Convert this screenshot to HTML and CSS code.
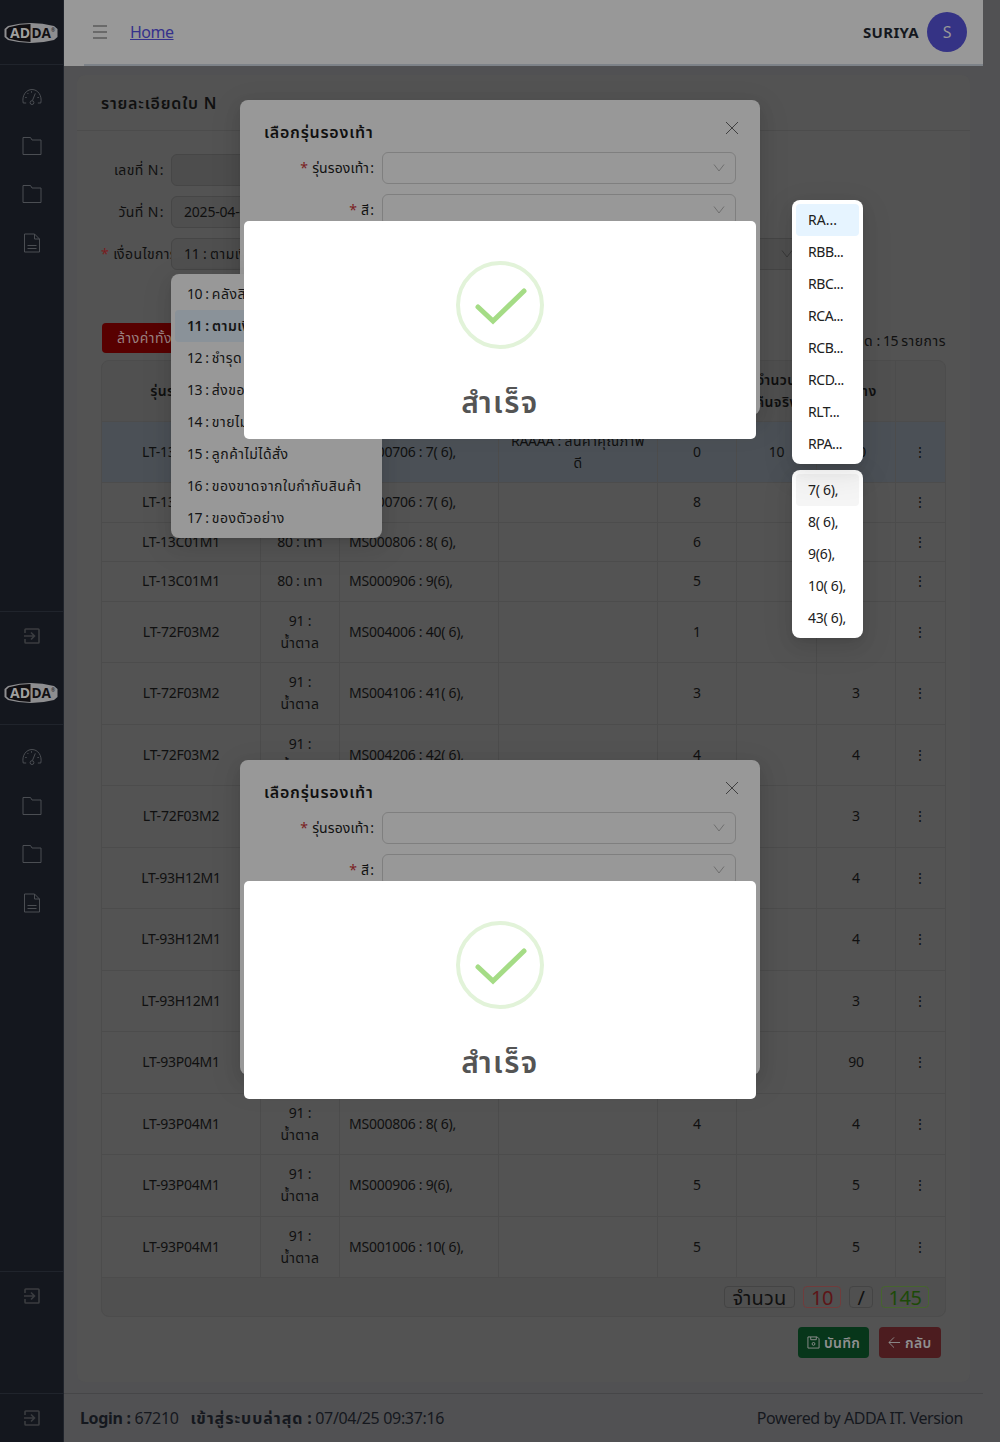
FILE: index.html
```html
<!DOCTYPE html>
<html lang="th">
<head>
<meta charset="utf-8">
<title>รายละเอียดใบ N</title>
<link rel="stylesheet" href="styles.css">
</head>
<body>
<svg width="0" height="0" class="defs">
  <symbol id="i-dash" viewBox="0 0 20 20"><path d="M4.200 16H1.200C-.4 8.500 4.200 2.500 10 2.500S20.400 8.500 18.800 16h-3"/><path d="M10.500 13.400l2.800-7"/><circle cx="10" cy="15.600" r="1.900"/><path d="M3.200 10.500h1.500M15.400 10.500h1.500M5.400 6l1 1M9.500 4.200v1.500"/></symbol>
  <symbol id="i-folder" viewBox="0 0 20 20"><path d="M1 1.500h7.500l1.500 2.500h9v14.500H1z"/></symbol>
  <symbol id="i-doc" viewBox="0 0 20 20"><path d="M2.500 1h10l5 5v13h-15zM12.500 1v5h5M5.500 12.500h9M5.500 15.500h9"/></symbol>
  <symbol id="i-exit" viewBox="0 0 16 16"><path d="M1 5V1.800Q1 1 1.800 1h12.400q.8 0 .8.800v12.400q0 .8-.8.800H1.800Q1 15 1 14.200V11"/><path d="M0 8h10.500M7 4.500L10.500 8 7 11.500"/></symbol>
  <symbol id="i-logo" viewBox="0 0 54 22"><path d="M4 4Q27-2 50 4l3.500 3v8L50 18Q27 24 4 18L.5 15V7z" fill="#8e8e90"/><path d="M5 5.200Q16 2 26.500 2v18Q16 20 5 16.800L2.500 14.500v-7z" fill="#110f12"/><text x="6" y="16.300" font-family="Open Sans, sans-serif" font-weight="700" font-size="15" letter-spacing="0" textLength="20" lengthAdjust="spacingAndGlyphs" fill="#a0a0a0">AD</text><text x="27.500" y="16.300" font-family="Open Sans, sans-serif" font-weight="700" font-size="15" letter-spacing="0" textLength="19.500" lengthAdjust="spacingAndGlyphs" fill="#110f12">DA</text><text x="47" y="9.500" font-family="Open Sans, sans-serif" font-size="5" fill="#110f12">®</text></symbol>
  <symbol id="i-down" viewBox="0 0 12 12"><path d="M1 2.500l5 6.500 5-6.500"/></symbol>
  <symbol id="i-close" viewBox="0 0 14 14"><path d="M1 1l12 12M13 1L1 13"/></symbol>
  <symbol id="i-ok" viewBox="0 0 88 88"><circle cx="44" cy="44" r="42" fill="none" stroke="#e2f3d9" stroke-width="4"/><path d="M22 46L37 60 68 30" fill="none" stroke="#a5dc86" stroke-width="5" stroke-linecap="round"/></symbol>
</svg>

<div class="app">
  <aside class="side">
    <div class="side-block">
      <div class="logo"><svg width="54" height="22"><use href="#i-logo"/></svg></div>
      <nav class="menu">
        <svg><use href="#i-dash"/></svg><svg><use href="#i-folder"/></svg><svg><use href="#i-folder"/></svg><svg><use href="#i-doc"/></svg>
      </nav>
      <div class="exit"><svg><use href="#i-exit"/></svg></div>
    </div>
    <div class="side-block">
      <div class="logo"><svg width="54" height="22"><use href="#i-logo"/></svg></div>
      <nav class="menu">
        <svg><use href="#i-dash"/></svg><svg><use href="#i-folder"/></svg><svg><use href="#i-folder"/></svg><svg><use href="#i-doc"/></svg>
      </nav>
      <div class="exit"><svg><use href="#i-exit"/></svg></div>
    </div>
    <div class="exit last"><svg><use href="#i-exit"/></svg></div>
  </aside>

  <div class="main">
    <header class="top">
      <svg class="burger" viewBox="0 0 14 14"><path d="M0 1h14M0 7h14M0 13h14"/></svg>
      <a class="home">Home</a>
      <strong class="user">SURIYA</strong>
      <span class="avatar">S</span>
    </header>

    <section class="card">
      <h2 class="card-title">รายละเอียดใบ N</h2>
      <div class="card-body">
        <div class="row"><label>เลขที่ N<i>:</i></label><div class="box off"></div></div>
        <div class="row"><label>วันที่ N<i>:</i></label><div class="box">2025-04-05</div></div>
        <div class="row"><label><b>*</b>เงื่อนไขการคืน</label><div class="box wide"><span>11 : <span class="th">ตามเงื่อนไข</span></span><svg class="arrow"><use href="#i-down"/></svg></div></div>
        <div class="tools"><button class="clear th">ล้างค่าทั้งหมด</button><span class="count"><span class="th">ทั้งหมด</span> : 15 <span class="th">รายการ</span></span></div>
        <div class="table-wrap">
        <table>
          <colgroup><col class="w159"><col class="w79"><col class="w159"><col class="w159"><col class="w79"><col class="w80"><col class="w79"><col></colgroup>
          <thead><tr><th>รุ่นรองเท้า</th><th>สี</th><th>ขนาด</th><th>เกรด</th><th>จำนวน</th><th>จำนวน<br>คืนจริง</th><th>คงค้าง</th><th></th></tr></thead>
          <tbody>
            <tr class="tall sel"><td>LT-13C01M1</td><td>80 : <span class="th">เทา</span></td><td>MS000706 : 7( 6),</td><td>RAAAA : <span class="th">สินค้าคุณภาพ<br>ดี</span></td><td>0</td><td>10</td><td>-10</td><td>⋮</td></tr>
            <tr><td>LT-13C01M1</td><td>80 : <span class="th">เทา</span></td><td>MS000706 : 7( 6),</td><td></td><td>8</td><td></td><td>8</td><td>⋮</td></tr>
            <tr><td>LT-13C01M1</td><td>80 : <span class="th">เทา</span></td><td>MS000806 : 8( 6),</td><td></td><td>6</td><td></td><td>6</td><td>⋮</td></tr>
            <tr><td>LT-13C01M1</td><td>80 : <span class="th">เทา</span></td><td>MS000906 : 9(6),</td><td></td><td>5</td><td></td><td>5</td><td>⋮</td></tr>
            <tr class="tall"><td>LT-72F03M2</td><td>91 :<br><span class="th">น้ำตาล</span></td><td>MS004006 : 40( 6),</td><td></td><td>1</td><td></td><td>1</td><td>⋮</td></tr>
            <tr class="tall"><td>LT-72F03M2</td><td>91 :<br><span class="th">น้ำตาล</span></td><td>MS004106 : 41( 6),</td><td></td><td>3</td><td></td><td>3</td><td>⋮</td></tr>
            <tr class="tall"><td>LT-72F03M2</td><td>91 :<br><span class="th">น้ำตาล</span></td><td>MS004206 : 42( 6),</td><td></td><td>4</td><td></td><td>4</td><td>⋮</td></tr>
            <tr class="tall"><td>LT-72F03M2</td><td>91 :<br><span class="th">น้ำตาล</span></td><td>MS004306 : 43( 6),</td><td></td><td>3</td><td></td><td>3</td><td>⋮</td></tr>
            <tr class="tall"><td>LT-93H12M1</td><td>91 :<br><span class="th">น้ำตาล</span></td><td>MS000706 : 7( 6),</td><td></td><td>4</td><td></td><td>4</td><td>⋮</td></tr>
            <tr class="tall"><td>LT-93H12M1</td><td>91 :<br><span class="th">น้ำตาล</span></td><td>MS000806 : 8( 6),</td><td></td><td>4</td><td></td><td>4</td><td>⋮</td></tr>
            <tr class="tall"><td>LT-93H12M1</td><td>91 :<br><span class="th">น้ำตาล</span></td><td>MS000906 : 9(6),</td><td></td><td>3</td><td></td><td>3</td><td>⋮</td></tr>
            <tr class="tall"><td>LT-93P04M1</td><td>91 :<br><span class="th">น้ำตาล</span></td><td>MS000706 : 7( 6),</td><td></td><td>90</td><td></td><td>90</td><td>⋮</td></tr>
            <tr class="tall"><td>LT-93P04M1</td><td>91 :<br><span class="th">น้ำตาล</span></td><td>MS000806 : 8( 6),</td><td></td><td>4</td><td></td><td>4</td><td>⋮</td></tr>
            <tr class="tall"><td>LT-93P04M1</td><td>91 :<br><span class="th">น้ำตาล</span></td><td>MS000906 : 9(6),</td><td></td><td>5</td><td></td><td>5</td><td>⋮</td></tr>
            <tr class="tall"><td>LT-93P04M1</td><td>91 :<br><span class="th">น้ำตาล</span></td><td>MS001006 : 10( 6),</td><td></td><td>5</td><td></td><td>5</td><td>⋮</td></tr>
          </tbody>
        </table>
        <div class="sum"><span class="tag t1">จำนวน</span><span class="tag red">10</span><span class="tag t3">/</span><span class="tag green">145</span></div>
        </div>
        <div class="actions">
          <button class="save"><svg viewBox="0 0 14 14"><path d="M1 1h10l2 2v10H1zM4 1v3h6V1"/><circle cx="7" cy="8.500" r="1.500"/></svg><span>บันทึก</span></button>
          <button class="back"><svg viewBox="0 0 14 14"><path d="M1 7h12M6.500 1.500L1 7l5.500 5.500"/></svg><span>กลับ</span></button>
        </div>
      </div>
    </section>

    <footer class="foot"><div><b>Login :</b> 67210 <b class="last-in"><span>เข้าสู่ระบบล่าสุด</span> :</b> 07/04/25 09:37:16</div><div class="power">Powered by ADDA IT. Version</div></footer>
  </div>
</div>

<div class="modal m1"><svg class="close"><use href="#i-close"/></svg><h3>เลือกรุ่นรองเท้า</h3>
  <div class="field"><label><b>*</b>รุ่นรองเท้า<i>:</i></label><div class="select"><svg class="arrow"><use href="#i-down"/></svg></div></div>
  <div class="field"><label><b>*</b>สี<i>:</i></label><div class="select"><svg class="arrow"><use href="#i-down"/></svg></div></div>
</div>
<div class="modal m2"><svg class="close"><use href="#i-close"/></svg><h3>เลือกรุ่นรองเท้า</h3>
  <div class="field"><label><b>*</b>รุ่นรองเท้า<i>:</i></label><div class="select"><svg class="arrow"><use href="#i-down"/></svg></div></div>
  <div class="field"><label><b>*</b>สี<i>:</i></label><div class="select"><svg class="arrow"><use href="#i-down"/></svg></div></div>
</div>

<div class="drop d1"><p>10 : <span class="th">คลังสินค้า</span></p><p class="on">11 : <span class="th">ตามเงื่อนไข</span></p><p>12 : <span class="th">ชำรุด</span></p><p>13 : <span class="th">ส่งของผิด</span></p><p>14 : <span class="th">ขายไม่ได้</span></p><p>15 : <span class="th">ลูกค้าไม่ได้สั่ง</span></p><p>16 : <span class="th">ของขาดจากใบกำกับสินค้า</span></p><p>17 : <span class="th">ของตัวอย่าง</span></p></div>

<div class="swal s1"><svg width="88" height="88"><use href="#i-ok"/></svg><h1>สำเร็จ</h1></div>
<div class="swal s2"><svg width="88" height="88"><use href="#i-ok"/></svg><h1>สำเร็จ</h1></div>

<div class="drop d3"><p class="on">7( 6),</p><p>8( 6),</p><p>9(6),</p><p>10( 6),</p><p>43( 6),</p></div>
<div class="drop d2"><p class="on">RA...</p><p>RBB...</p><p>RBC...</p><p>RCA...</p><p>RCB...</p><p>RCD...</p><p>RLT...</p><p>RPA...</p></div>
</body>
</html>
```
FILE: styles.css
```css
* { box-sizing: border-box; }
body { margin: 0; width: 1000px; height: 1442px; overflow: hidden; position: relative; background: #515153; color: #101010; font: 14px/22px "Noto Sans", "Noto Sans Thai", sans-serif; letter-spacing: -0.45px; }
.defs { position: absolute; }
h1, h2, h3, p { margin: 0; }
svg { display: block; fill: none; stroke: currentColor; flex: none; }
.app { display: flex; height: 1442px; }
.th { letter-spacing: 0.5px; }

.side { width: 64px; background: #14171e; border-right: 1px solid #20242c; color: #4b4e53; display: flex; flex-direction: column; }
.side-block { height: 660px; display: flex; flex-direction: column; }
.logo { height: 65px; border-bottom: 1px solid #20242c; display: flex; justify-content: center; align-items: center; padding: 1px 1px 0 0; }
.logo svg { stroke: none; }
.menu { flex: 1; display: flex; flex-direction: column; align-items: center; gap: 28.500px; padding: 22px 0 0 1px; }
.menu svg { width: 20px; height: 20px; }
.exit { height: 49px; border-top: 1px solid #20242c; display: flex; justify-content: center; align-items: center; color: #3b3d40; padding-left: 1px; }
.exit svg { width: 16px; height: 16px; stroke-width: 1.600; }
.last { margin-top: auto; }

.main { flex: 1; display: flex; flex-direction: column; }
.top { width: 919px; height: 66px; background: linear-gradient(#7d8288, #7d8288) 20px 100% / 100% 2px no-repeat #989898; display: flex; align-items: center; padding: 0 16px 2px 29px; font-size: 16px; }
.burger { width: 14px; height: 14px; color: #3c3c3c; }
.home { color: #35318b; text-decoration: underline; margin-left: 23px; letter-spacing: -0.5px; }
.user { margin-left: auto; color: #15181e; font-size: 15px; letter-spacing: 0.3px; }
.avatar { width: 40px; height: 40px; border-radius: 50%; background: #353385; color: #989898; margin-left: 8px; display: flex; align-items: center; justify-content: center; }

.card { width: 893px; height: 1307px; margin: 9px 0 0 13px; background: #535353; border-radius: 8px; flex: none; }
.card-title { height: 56px; border-bottom: 1px solid #4c4c4c; padding-left: 24px; font-size: 16px; line-height: 56px; font-weight: 600; letter-spacing: 0.8px; }
.card-body { padding: 23px 24px 0; }
.row { display: flex; height: 32px; margin-bottom: 10px; align-items: center; }
.row label { width: 70px; white-space: nowrap; overflow: hidden; text-align: right; padding-right: 7px; flex: none; letter-spacing: 0.4px; }
.row:nth-child(3) label { text-align: left; padding: 0; }
label i { font-style: normal; margin: 0 0 0 1px; }
label b { color: #7a1d1f; font-weight: 400; margin-right: 4px; }
.row .box { width: 240px; height: 32px; border: 1px solid #464646; border-radius: 6px; line-height: 30px; padding: 0 11px 0 12px; background: #4f4f4f; letter-spacing: -0.2px; }
.row .wide { width: 634px; display: flex; justify-content: space-between; align-items: center; }
.arrow { width: 12px; height: 12px; color: #393939; }
.row .off { background: #4d4d4d; }
.tools { height: 30px; margin-top: 53px; display: flex; justify-content: space-between; align-items: center; }
button { border: 0; font: inherit; letter-spacing: inherit; color: #8f8f8f; border-radius: 4px; }
.clear { background: #580000; height: 30px; padding: 0 15px; margin-left: 1px; color: #9a8080; letter-spacing: 0.5px; }
.count { padding-top: 6px; }
.table-wrap { margin-top: 7px; border: 1px solid #4c4c4c; border-radius: 8px; overflow: hidden; height: 957px; background: #505050; width: 845px; }
table { border-collapse: separate; border-spacing: 0; table-layout: fixed; width: 843px; }
.w159 { width: 159px; } .w79 { width: 79px; } .w80 { width: 80px; }
th, td { border-right: 1px solid #4c4c4c; border-bottom: 1px solid #4c4c4c; text-align: center; padding: 0 8px; white-space: nowrap; }
th:last-child, td:last-child { border-right: 0; padding-right: 9px; }
th { height: 60.500px; font-weight: 600; background: #505050; letter-spacing: 0.4px; }
td { height: 39.500px; background: #535353; letter-spacing: -0.25px; }
td:nth-child(3) { text-align: left; padding-left: 9px; }
.tall td { height: 61.500px; }
.sel td { background: #4b5056; }
.sum { display: flex; justify-content: flex-end; gap: 8px; padding: 8px 16px; }
.tag { height: 22px; border: 1px solid #444; border-radius: 4px; font-size: 20px; line-height: 22px; text-align: center; }
.t1 { width: 71px; letter-spacing: 0.2px; } .red { width: 38px; color: #5d1517; border-color: #703c3c; } .t3 { width: 24px; } .green { width: 48px; color: #1d4a08; border-color: #46652f; }
.actions { display: flex; justify-content: flex-end; gap: 10px; padding: 10px 5px 0 0; }
.actions button { height: 31px; display: flex; align-items: center; gap: 4px; padding: 0 9px; font-weight: 600; letter-spacing: 0.3px; }
.actions svg { width: 13px; height: 13px; }
.save { background: #07361a; width: 71px; } .back { background: #4c1c1f; width: 62px; }
.foot { width: 919px; border-top: 1px solid #464648; margin-top: 11px; flex: 1; display: flex; align-items: center; justify-content: space-between; padding: 0 20px 0 16px; font-size: 16px; color: #15181e; letter-spacing: -0.33px; }
.last-in { margin-left: 8px; }
.last-in span { letter-spacing: 0.95px; }
.power { letter-spacing: -0.42px; }

.modal { position: absolute; left: 240px; width: 520px; height: 315px; background: #989898; border-radius: 8px; padding: 20px 24px; box-shadow: 0 6px 16px rgba(0,0,0,.1), 0 9px 28px 8px rgba(0,0,0,.06); }
.m1 { top: 100px; } .m2 { top: 760px; }
.modal h3 { font-size: 16px; line-height: 24px; font-weight: 600; margin-bottom: 8px; letter-spacing: 0.75px; }
.close { position: absolute; right: 21px; top: 21px; width: 14px; height: 14px; color: #404040; }
.field { display: flex; align-items: center; height: 32px; margin-bottom: 10px; }
.field label { width: 118px; text-align: right; padding-right: 8px; letter-spacing: 0.1px; }
.select { width: 354px; height: 32px; border: 1px solid #7f7f7f; border-radius: 6px; display: flex; justify-content: flex-end; align-items: center; padding-right: 10px; }
.select .arrow { color: #6f6f6f; }

.drop { position: absolute; border-radius: 8px; padding: 4px; background: #fff; color: #202020; box-shadow: 0 6px 16px rgba(0,0,0,.08), 0 3px 6px -4px rgba(0,0,0,.12), 0 9px 28px 8px rgba(0,0,0,.05); }
.drop p { height: 32px; line-height: 32px; padding: 0 12px; border-radius: 4px; white-space: nowrap; }
.d1 { left: 171px; top: 274px; width: 211px; background: #989898; color: #141414; }
.d1 .on { background: #8a9299; font-weight: 600; }
.d2 { left: 792px; top: 200px; width: 71px; }
.d2 .on { background: #e6f4ff; letter-spacing: 0; }
.d3 { left: 792px; top: 470px; width: 71px; letter-spacing: -0.25px; }
.d3 .on { background: #f5f5f5; }

.swal { position: absolute; left: 244px; width: 512px; height: 218px; border-radius: 5px; background: #fff; padding-top: 40px; display: flex; flex-direction: column; align-items: center; }
.s1 { top: 221px; } .s2 { top: 881px; }
.swal svg { stroke: none; }
.swal h1 { margin-top: 31px; font-size: 30px; line-height: 44px; font-weight: 600; color: #545454; letter-spacing: 1.500px; }
```
